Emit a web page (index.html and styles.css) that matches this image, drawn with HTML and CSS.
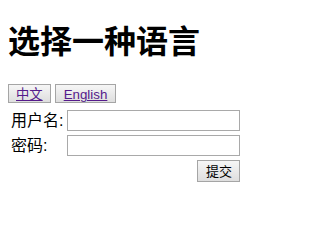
FILE: index.html
```html
<!DOCTYPE html>
<html lang="zh">
<head>
<meta charset="utf-8">
<title>选择一种语言</title>
<link rel="stylesheet" href="styles.css">
</head>
<body>
<h1 class="title">选择一种语言</h1>
<div class="langs">
  <a class="lang-btn" href="#zh">中文</a>
  <a class="lang-btn lang-btn--latin" href="#en">English</a>
</div>
<form class="login">
  <table class="login-table">
    <tr>
      <td class="label">用户名:</td>
      <td><input class="field" type="text"></td>
    </tr>
    <tr>
      <td class="label">密码:</td>
      <td><input class="field" type="password"></td>
    </tr>
    <tr>
      <td></td>
      <td class="actions"><button class="submit" type="submit">提交</button></td>
    </tr>
  </table>
</form>
</body>
</html>
```
FILE: styles.css
```css
html, body {
  background: #ffffff;
}
body {
  margin: 0;
  padding: 8px;
  font-family: "Liberation Sans", "Noto Sans CJK SC", sans-serif;
  font-size: 16px;
  color: #000000;
}
.title {
  margin: 13px 0 26px;
  font-family: "Noto Sans CJK SC", sans-serif;
  font-size: 32px;
  font-weight: bold;
  line-height: 37px;
}
.langs {
  display: flex;
  gap: 4px;
  margin-bottom: 4px;
}
.lang-btn {
  display: inline-block;
  box-sizing: border-box;
  height: 19px;
  padding: 2px 7px 0;
  border: 1px solid #a5a5a5;
  background: linear-gradient(#f6f6f6, #dedede);
  color: #551a8b;
  font-family: "Liberation Sans", "Noto Sans CJK SC", sans-serif;
  font-size: 13.33px;
  line-height: 15px;
  text-decoration: underline;
}
.lang-btn--latin {
  padding: 2px 8px 0;
}
.login {
  margin: 0;
}
.login-table {
  border-collapse: separate;
  border-spacing: 2px;
}
.login-table td {
  padding: 1px;
  line-height: 18px;
  vertical-align: middle;
}
.label {
  white-space: nowrap;
}
.field {
  display: block;
  box-sizing: border-box;
  width: 173px;
  height: 21px;
  margin: 0;
  border: 1px solid #a9a9a9;
  background: #ffffff;
  padding: 0 2px;
}
.actions {
  text-align: right;
}
.submit {
  box-sizing: border-box;
  width: 43px;
  height: 22px;
  margin: 0;
  padding: 0;
  border: 1px solid #a5a5a5;
  background: linear-gradient(#f6f6f6, #dedede);
  color: #000000;
  font-family: "Noto Sans CJK SC", sans-serif;
  font-size: 13px;
  line-height: 18px;
}
```
